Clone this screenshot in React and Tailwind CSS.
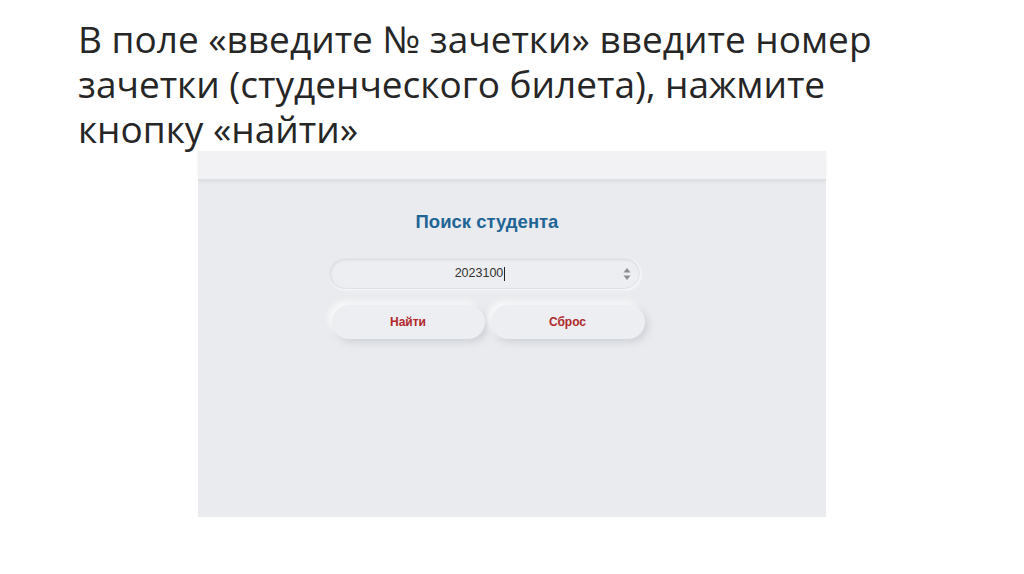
import React from "react";

const App = () => {
  return (
    <div className="w-[1024px] h-[574px] bg-white overflow-hidden" style={{ fontFamily: "'Open Sans', sans-serif" }}>
      <div className="pl-[78px] pt-[16px] text-[37px] leading-[45px] text-[#262626]" style={{ fontFamily: "'Open Sans', 'Noto Sans', sans-serif" }}>
        <p>В поле «введите № зачетки» введите номер</p>
        <p>зачетки (студенческого билета), нажмите</p>
        <p>кнопку «найти»</p>
      </div>

      {/* screenshot of the search page */}
      <div className="ml-[198px] mt-[0px] w-[628px] h-[366px] bg-[#e9ebee] flex flex-col">
        <div className="h-[30px] bg-[#f2f2f4] border-b-2 border-[#dddfe3] shadow-[0_1px_3px_rgba(0,0,0,0.06)]"></div>
        <div className="flex flex-col items-center" style={{ fontFamily: "'Liberation Sans', Arial, sans-serif" }}>
          <h2 className="mt-[29px] text-[18.5px] leading-[24px] font-bold text-[#1f6595] ml-[-50px]">Поиск студента</h2>
          <div className="mt-[24px] ml-[-56px] w-[311px] h-[31px] rounded-full bg-[#eceef1] border border-[#dfe1e5] shadow-[inset_1px_1px_3px_rgba(0,0,0,0.08),1px_1px_3px_rgba(255,255,255,0.8)] flex items-center relative">
            <span className="flex-1 text-center text-[12.5px] text-[#333] pr-[8px]">
              2023100<span className="inline-block w-px h-[14px] bg-[#222] align-middle ml-px"></span>
            </span>
            <svg className="absolute right-[8px] top-[8px]" width="8" height="14" viewBox="0 0 8 14">
              <path d="M4 1 L7.5 5.5 L0.5 5.5 Z" fill="#8a8d92" />
              <path d="M4 13 L7.5 8.5 L0.5 8.5 Z" fill="#8a8d92" />
            </svg>
          </div>
          <div className="mt-[16px] ml-[-48px] flex gap-[6px]">
            <button className="w-[153px] h-[34px] rounded-full bg-[#eceef1] text-[12px] font-bold text-[#b0282a] shadow-[3px_3px_7px_rgba(170,175,185,0.45),-3px_-3px_6px_rgba(255,255,255,0.9)]">
              Найти
            </button>
            <button className="w-[154px] h-[34px] rounded-full bg-[#eceef1] text-[12px] font-bold text-[#b0282a] shadow-[3px_3px_7px_rgba(170,175,185,0.45),-3px_-3px_6px_rgba(255,255,255,0.9)]">
              Сброс
            </button>
          </div>
        </div>
      </div>
    </div>
  );
};

export default App;
